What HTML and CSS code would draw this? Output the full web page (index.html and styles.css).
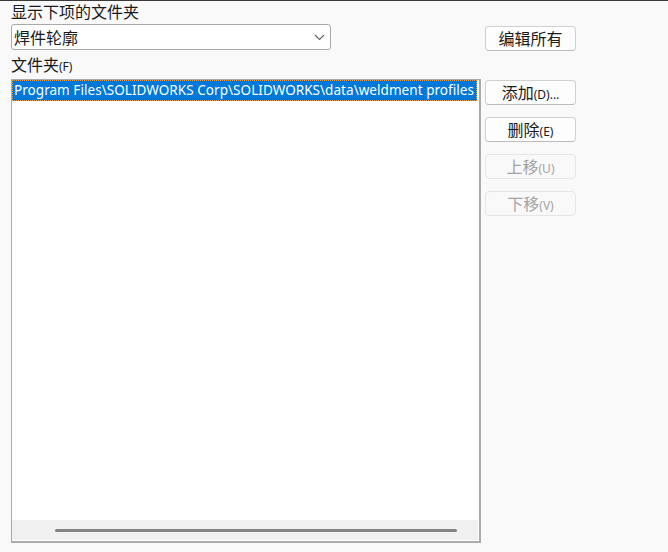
FILE: index.html
```html
<!DOCTYPE html>
<html lang="zh-CN">
<head>
<meta charset="utf-8">
<title>文件夹</title>
<link rel="stylesheet" href="styles.css">
</head>
<body>
<div class="dlg">
  <div class="left">
    <div class="lbl">显示下项的文件夹</div>
    <div class="combo">
      <span class="combo-text">焊件轮廓</span>
      <svg class="chev" width="11" height="7" viewBox="0 0 11 7"><path d="M1 1 L5.5 5.5 L10 1" fill="none" stroke="#606060" stroke-width="1.1"/></svg>
    </div>
    <div class="lbl2">文件夹<span class="acc">(F)</span></div>
    <div class="list">
      <div class="items">
        <div class="item sel">Program Files\SOLIDWORKS Corp\SOLIDWORKS\data\weldment profiles</div>
      </div>
      <div class="hscroll"><div class="thumb"></div></div>
    </div>
  </div>
  <div class="right">
    <div class="btn first">编辑所有</div>
    <div class="btn second">添加<span class="acc">(D)...</span></div>
    <div class="btn">删除<span class="acc">(E)</span></div>
    <div class="btn dis">上移<span class="acc">(U)</span></div>
    <div class="btn dis">下移<span class="acc">(V)</span></div>
  </div>
</div>
</body>
</html>
```
FILE: styles.css
```css
* { box-sizing: border-box; }
html, body { margin: 0; padding: 0; }
body {
  width: 668px;
  height: 552px;
  background: #f9f9f9;
  border-top: 1px solid #3a3a3a;
  font-family: "Noto Sans", "Noto Sans CJK SC", sans-serif;
  color: #1a1a1a;
  overflow: hidden;
}
.dlg {
  display: flex;
  flex-direction: row;
}
.left {
  padding-left: 11px;
  width: 481px;
  display: flex;
  flex-direction: column;
}
.lbl {
  height: 23px;
  font-family: "Noto Sans CJK SC", sans-serif;
  font-size: 16px;
  line-height: 21px;
}
.combo {
  width: 320px;
  height: 26px;
  border: 1px solid #a9a9a9;
  border-radius: 3px;
  background: #ffffff;
  display: flex;
  align-items: center;
  justify-content: space-between;
  padding: 0 5px 0 2px;
}
.combo-text {
  font-family: "Noto Sans CJK SC", sans-serif;
  font-size: 16px;
  line-height: 24px;
}
.chev { display: block; margin-top: 1px; }
.lbl2 {
  height: 29px;
  font-family: "Noto Sans CJK SC", sans-serif;
  font-size: 16px;
  line-height: 28px;
}
.acc {
  font-family: "Noto Sans", sans-serif;
  font-size: 12px;
}
.list {
  width: 470px;
  height: 464px;
  border: 1px solid #a8abae;
  border-right-width: 2px;
  border-bottom-width: 2px;
  background: #ffffff;
  display: flex;
  flex-direction: column;
  padding: 0 1px 1px 0;
}
.items {
  flex: 1;
  overflow: hidden;
}
.item {
  height: 21px;
  font-size: 13.5px;
  line-height: 19px;
  letter-spacing: 0.05px;
  white-space: nowrap;
  padding-left: 1px;
  overflow: hidden;
}
.item.sel {
  width: 465px;
  background: #0078d7;
  color: #ffffff;
  border: 1px dotted #e8a050;
}
.hscroll {
  height: 20px;
  background: #f0f0f0;
  display: flex;
  align-items: center;
  padding-left: 43px;
}
.thumb {
  width: 402px;
  height: 3px;
  border-radius: 2px;
  background: #858585;
}
.right {
  display: flex;
  flex-direction: column;
  padding-left: 4px;
  gap: 12px;
}
.btn {
  width: 91px;
  height: 25px;
  border: 1px solid #d0d0d0;
  border-bottom-color: #bcbcbc;
  border-radius: 4px;
  background: #fdfdfd;
  font-family: "Noto Sans CJK SC", sans-serif;
  font-size: 16px;
  line-height: 22px;
  text-align: center;
  color: #1a1a1a;
}
.btn.first { margin-top: 25px; }
.btn.second { margin-top: 17px; }
.btn.dis {
  border-color: #e6e6e6;
  background: #f9f9f9;
  color: #a3a3a3;
}
```
